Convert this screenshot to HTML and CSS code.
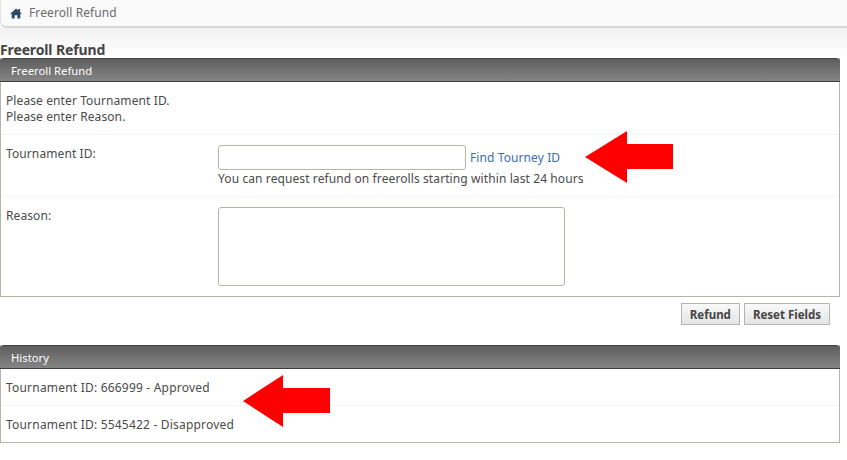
FILE: index.html
```html
<!DOCTYPE html>
<html lang="en">
<head>
  <meta charset="UTF-8" />
  <title>Freeroll Refund</title>
  <link rel="stylesheet" href="styles.css">
</head>
<body>
  <div class="breadcrumb">
    <svg class="home" viewBox="0 0 13 12" width="12" height="11"><path d="M6.5 0.5 L9 2.8 V1 H11 V4.7 L13 6.6 H11.2 V11.5 H8 V7.8 H5 V11.5 H1.8 V6.6 H0 Z" fill="#2c4a68"/></svg>
    <span>Freeroll Refund</span>
  </div>

  <h1 class="page-title">Freeroll Refund</h1>

  <div class="panel">
    <div class="panel-head">Freeroll Refund</div>
    <div class="messages">
      <div>Please enter Tournament ID.</div>
      <div>Please enter Reason.</div>
    </div>
    <div class="row row-id">
      <label>Tournament ID:</label>
      <div class="field">
        <div class="input-line">
          <input type="text" class="id-input" />
          <a href="#" class="link">Find Tourney ID</a>
        </div>
        <div class="hint">You can request refund on freerolls starting within last 24 hours</div>
      </div>
    </div>
    <div class="row row-reason">
      <label>Reason:</label>
      <div class="field">
        <textarea class="reason-input"></textarea>
      </div>
    </div>
  </div>

  <div class="buttons">
    <button type="button">Refund</button>
    <button type="button">Reset Fields</button>
  </div>

  <div class="panel">
    <div class="panel-head">History</div>
    <div class="history-item">Tournament ID: 666999 - Approved</div>
    <div class="history-item">Tournament ID: 5545422 - Disapproved</div>
  </div>

  <svg class="arrow arrow-find" viewBox="0 0 88 52" width="88" height="52"><path d="M0 26 L42 0 V13 H88 V38 H42 V52 Z" fill="#ff0000"/></svg>
  <svg class="arrow arrow-history" viewBox="0 0 87 52" width="87" height="52"><path d="M0 26 L40 0 V13 H87 V38 H40 V52 Z" fill="#ff0000"/></svg>
</body>
</html>
```

FILE: styles.css
```css
* {
  box-sizing: border-box;
}

body {
  margin: 0;
  height: 460px;
  overflow: hidden;
  position: relative;
  background-color: white;
  font-family: "Noto Sans", "DejaVu Sans", sans-serif;
  font-size: 12px;
  line-height: 16px;
  letter-spacing: 0.1px;
  color: #4a4a4a;
}

.breadcrumb {
  height: 28px;
  margin-right: -8px;
  padding: 5px 0 0 9px;
  display: flex;
  align-items: flex-start;
  gap: 7px;
  background-color: #fafafa;
  border: 1px solid #e2e2e2;
  border-top: none;
  border-bottom: 2px solid #d8d8d8;
  border-radius: 0 0 0 6px;
  color: #6b6b6b;
}

.home {
  margin-top: 3px;
}

.page-title {
  margin: 0;
  padding-top: 14px;
  height: 30px;
  font-size: 14px;
  line-height: 16px;
  letter-spacing: -0.13px;
  font-weight: bold;
  color: #444;
  background: linear-gradient(#f2f2f2, white);
}

.panel {
  margin-right: 7px;
  border: 1px solid #b5b5a8;
  border-top: none;
  background-color: white;
}

.panel-head {
  height: 24px;
  margin: 0 -1px;
  padding: 4px 0 0 11px;
  border-radius: 4px 4px 0 0;
  border-top: 1px solid #444;
  border-bottom: 1px solid #3c3c3c;
  background: linear-gradient(#5e5e5e, #858585);
  font-size: 11.3px;
  letter-spacing: 0;
  color: white;
}

.messages {
  padding: 11px 5px 9px;
  height: 52px;
}

.row {
  display: flex;
  padding: 0 5px;
  border-top: 1px solid #f4f4f4;
}

.row label {
  width: 212px;
  flex-shrink: 0;
  margin-top: 1px;
}

.row-id {
  height: 62px;
  padding-top: 10px;
}

.row-reason {
  height: 100px;
  padding-top: 10px;
}

.input-line {
  display: flex;
  align-items: center;
  gap: 4px;
}

.id-input {
  width: 248px;
  height: 25px;
  border: 1px solid #b5b5a8;
  border-radius: 3px;
  background-color: white;
}

.link {
  color: #3a6db5;
  text-decoration: none;
}

.hint {
  margin-top: 1px;
}

.reason-input {
  display: block;
  width: 347px;
  height: 79px;
  border: 1px solid #b5b5a8;
  border-radius: 3px;
  background-color: white;
  resize: none;
}

.buttons {
  display: flex;
  justify-content: flex-end;
  gap: 4px;
  height: 48px;
  padding: 6px 17px 0 0;
}

button {
  height: 22px;
  padding: 0 8px;
  border: 1px solid #b4b4b4;
  background: linear-gradient(#fafafa, #e4e4e4);
  font-family: "Noto Sans", "DejaVu Sans", sans-serif;
  font-size: 11.5px;
  font-weight: bold;
  color: #444;
}

.history-item {
  height: 36px;
  padding: 11px 5px 0;
  letter-spacing: 0.2px;
  border-top: 1px solid #f4f4f4;
}

.history-item:last-child {
  height: 37px;
}

.panel-head + .history-item {
  border-top: none;
}

.arrow {
  position: absolute;
}

.arrow-find {
  left: 585px;
  top: 131px;
}

.arrow-history {
  left: 243px;
  top: 375px;
}
```
